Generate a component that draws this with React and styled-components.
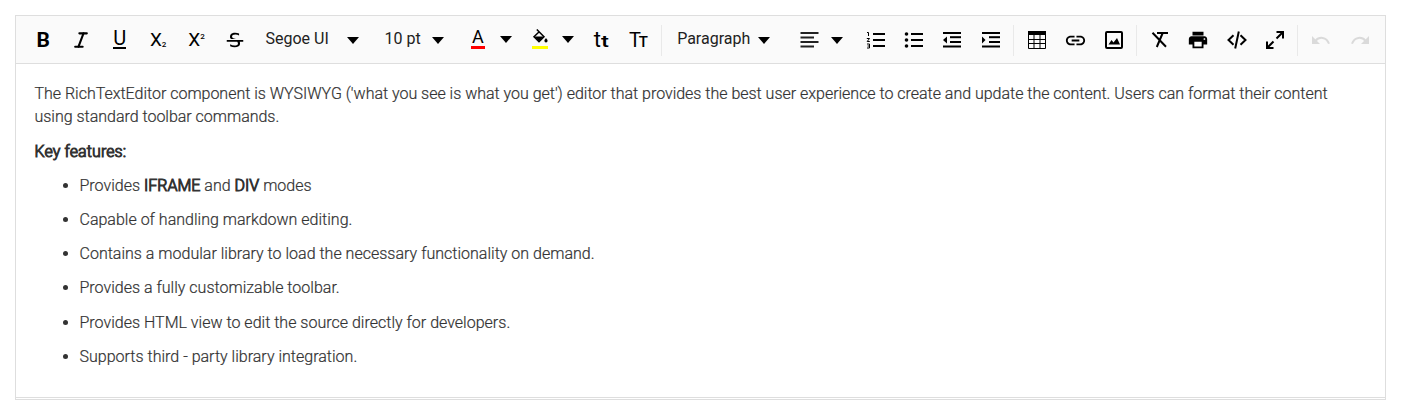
import React from "react";
import styled, { createGlobalStyle } from "styled-components";
import { Italic } from "lucide-react";
import { MdLink, MdPrint } from "react-icons/md";
import { RiStrikethrough } from "react-icons/ri";

const GlobalStyle = createGlobalStyle`
  body { margin: 0; background: #fff; font-family: Roboto, "Liberation Sans", sans-serif; }
  * { box-sizing: border-box; }
`;

const Editor = styled.div`
  margin: 15px 18px 0 15px;
  height: 385px;
  border: 1px solid #dedede;
  display: flex;
  flex-direction: column;
`;
const Toolbar = styled.div`
  flex: none;
  height: 48px;
  padding: 1px 0 0 8px;
  display: flex;
  align-items: center;
  background: #fafafa;
  border-bottom: 1px solid #dedede;
`;
const IconButton = styled.button`
  flex: none;
  width: 38.33px;
  height: 38px;
  padding: 0;
  border: 0;
  background: none;
  display: flex;
  align-items: center;
  justify-content: center;
  color: ${(p) => (p.disabled ? "#dadada" : "#000")};
  font: 400 20px/20px Roboto, sans-serif;
  svg { display: block; flex: none; }
`;
const DropButton = styled.button`
  flex: none;
  width: ${(p) => p.$width}px;
  height: 38px;
  padding: 0 ${(p) => p.$end}px 0 ${(p) => p.$start}px;
  border: 0;
  background: none;
  display: flex;
  align-items: center;
  justify-content: space-between;
  color: #212121;
  font: 400 16px/20px Roboto, sans-serif;
  white-space: nowrap;
`;
const Label = styled.span`
  margin-top: -3px;
`;
const Caret = styled.span`
  border: 6.5px solid transparent;
  border-top: 7px solid #000;
  border-bottom: 0;
  margin-top: ${(p) => p.$top ?? 0}px;
`;
const Separator = styled.span`
  flex: none;
  width: 1px;
  height: 31px;
  margin: 0 4px 0 3px;
  background: #e9e9e9;
`;
const Swatch = styled.span`
  width: ${(p) => p.$width}px;
  height: 20px;
  margin-top: -2px;
  display: flex;
  flex-direction: column;
  align-items: center;
  justify-content: space-between;
  border-bottom: 3px solid ${(p) => p.$color};
  color: #000;
  font-size: 18px;
  line-height: 16px;
`;
const Letter = styled.span`
  font-size: ${(p) => p.$size || 20}px;
  font-weight: ${(p) => p.$weight || 400};
  line-height: 20px;
  white-space: nowrap;
`;
const Underlined = styled.span`
  width: 13px;
  height: 18px;
  display: flex;
  justify-content: center;
  line-height: 15px;
  border-bottom: 2px solid #000;
`;
const Small = styled.span`
  display: inline-block;
  font-size: ${(p) => p.$size}px;
  font-weight: 500;
  line-height: 10px;
  transform: translateY(${(p) => p.$shift || 0}px) scaleX(${(p) => p.$stretch || 1});
  transform-origin: left;
  margin-left: ${(p) => p.$left || 0}px;
`;
const Content = styled.div`
  flex: 1;
  min-height: 0;
  padding: 17.5px 19px 0 18.5px;
  margin-bottom: 1px;
  border-bottom: 1px solid #dedede;
  color: #333;
  font-size: 16px;
  font-weight: 300;
  line-height: 23px;
  letter-spacing: -0.016px;
  -webkit-text-stroke: 0.2px #333;
`;
const Paragraph = styled.p`
  margin: 0 0 ${(p) => p.$gap ?? 12}px;
`;
const List = styled.ul`
  margin: 0;
  padding-left: 45px;
  letter-spacing: 0.01px;
`;
const Item = styled.li`
  margin-bottom: 11.2px;
`;
const Strong = styled.strong`
  font-weight: 300;
  -webkit-text-stroke: 1px #333;
`;
const Heading = styled(Strong)`
  letter-spacing: 0.1px;
`;

const Glyph = ({ w = 20, h = 20, children }) => (
  <svg width={w} height={h} viewBox={`0 0 ${w} ${h}`} fill="currentColor">{children}</svg>
);
const Bars = ({ rows }) => rows.map(([x, y, w]) => <rect key={y} x={x} y={y} width={w} height="2" />);

const AlignIcon = () => <Glyph w={19}><Bars rows={[[0.5, 2, 18], [0.5, 6.5, 13.5], [0.5, 11, 18], [0.5, 15.5, 13.5]]} /></Glyph>;
const NumberedIcon = () => (
  <Glyph>
    <Bars rows={[[7, 3, 12], [7, 9, 12], [7, 15, 12]]} />
    <g fill="none" stroke="#000" strokeWidth="1">
      <path d="M1 2.5h1.5V6M.8 8.5h2.7L1.2 11.5h2.6M1 14h2.5v4H1M1.5 16h2" />
    </g>
  </Glyph>
);
const BulletIcon = () => (
  <Glyph>
    <Bars rows={[[7, 3, 12], [7, 9, 12], [7, 15, 12]]} />
    <circle cx="2.5" cy="4" r="1.8" /><circle cx="2.5" cy="10" r="1.8" /><circle cx="2.5" cy="16" r="1.8" />
  </Glyph>
);
const IndentIcon = ({ inward }) => (
  <Glyph>
    <Bars rows={[[1, 2, 18], [8, 6.2, 11], [8, 11, 11], [1, 15.5, 18]]} />
    <path d={inward ? "M1 6.5v7L4.5 10z" : "M5 6.5v7L1 10z"} />
  </Glyph>
);
const TableIcon = () => (
  <Glyph>
    <rect x="1" y="1" width="18" height="4" />
    <path d="M1.5 4v14.5h17V4M7 5v13.5M13 5v13.5M1 9.5h18M1 13.5h18" fill="none" stroke="#000" strokeWidth="1" />
  </Glyph>
);
const ImageIcon = () => (
  <Glyph>
    <rect x="2" y="2" width="16" height="16" rx="1" fill="none" stroke="#000" strokeWidth="2" />
    <path d="M4.5 14.5L7.5 10l2 2.5L13 8l3 6.5z" />
  </Glyph>
);
const ClearIcon = () => (
  <Glyph>
    <path d="M7 3h11M2.5 2.8L16 16.7M12.5 3.5L6.8 17" fill="none" stroke="#000" strokeWidth="2" />
  </Glyph>
);
const CodeIcon = () => (
  <Glyph>
    <path d="M6.5 5.2L1.5 10l5 4.8M13.5 5.2l5 4.8-5 4.8M11.8 1.5L8.2 18.5" fill="none" stroke="#000" strokeWidth="2" />
  </Glyph>
);
const ExpandIcon = () => (
  <Glyph>
    <path d="M11.5 8.5L17.5 2.5M11.5 2h6.5v6.5M8.5 11.5L2.5 17.5M2 11.5V18h6.5" fill="none" stroke="#000" strokeWidth="2" />
  </Glyph>
);
const UndoIcon = ({ flip }) => (
  <Glyph>
    <g transform={flip ? "translate(20 0) scale(-1 1)" : undefined}>
      <path d="M1 6v8h8z" />
      <path d="M4.5 10.8C8 6.5 15.5 6.5 18 13.8" fill="none" stroke="currentColor" strokeWidth="2" />
    </g>
  </Glyph>
);
const BucketIcon = () => (
  <Glyph w={16} h={16}>
    <path d="M4.8.5L12 7.7 7 12.7 2 7.7 7.2 2.8" fill="none" stroke="#000" strokeWidth="1.5" />
    <path d="M2 7.5h10l-5 5z" />
    <path d="M14 9c1 1.4 1.6 2 1.6 2.8a1.6 1.6 0 0 1-3.2 0C12.4 11 13 10.4 14 9z" />
  </Glyph>
);

const features = [
  <>Provides <Strong>IFRAME</Strong> and <Strong>DIV</Strong> modes</>,
  "Capable of handling markdown editing.",
  "Contains a modular library to load the necessary functionality on demand.",
  "Provides a fully customizable toolbar.",
  "Provides HTML view to edit the source directly for developers.",
  "Supports third - party library integration.",
];

export default function App() {
  return (
    <>
      <GlobalStyle />
      <Editor>
        <Toolbar>
          <IconButton><Letter $size={21} $weight={700}>B</Letter></IconButton>
          <IconButton><Italic size={20} strokeWidth={2.5} /></IconButton>
          <IconButton><Underlined>U</Underlined></IconButton>
          <IconButton><Letter $size={19}>X<Small $size={8} $shift={1}>2</Small></Letter></IconButton>
          <IconButton><Letter $size={19}>X<Small $size={8} $shift={-7}>2</Small></Letter></IconButton>
          <IconButton><RiStrikethrough size={22} /></IconButton>
          <DropButton $width={119} $start={11.5} $end={14}><Label>Segoe UI</Label><Caret /></DropButton>
          <DropButton $width={85} $start={11.5} $end={14}><Label>10 pt</Label><Caret /></DropButton>
          <DropButton $width={62} $start={13} $end={8}><Swatch $width={14} $color="#f00">A</Swatch><Caret $top={-1} /></DropButton>
          <DropButton $width={61} $start={12} $end={7}><Swatch $width={16} $color="#ff0"><BucketIcon /></Swatch><Caret $top={-1} /></DropButton>
          <IconButton><Letter $size={22}>t<Small $size={17} $stretch={1.4}>t</Small></Letter></IconButton>
          <IconButton><Letter>T<Small $size={15} $left={-2}>T</Small></Letter></IconButton>
          <Separator />
          <DropButton $width={119} $start={11.5} $end={14.5}><Label>Paragraph</Label><Caret /></DropButton>
          <DropButton $width={72} $start={15} $end={14}><AlignIcon /><Caret /></DropButton>
          <IconButton><NumberedIcon /></IconButton>
          <IconButton><BulletIcon /></IconButton>
          <IconButton><IndentIcon /></IconButton>
          <IconButton><IndentIcon inward /></IconButton>
          <Separator />
          <IconButton><TableIcon /></IconButton>
          <IconButton><MdLink size={23} /></IconButton>
          <IconButton><ImageIcon /></IconButton>
          <Separator />
          <IconButton><ClearIcon /></IconButton>
          <IconButton><MdPrint size={22} /></IconButton>
          <IconButton><CodeIcon /></IconButton>
          <IconButton><ExpandIcon /></IconButton>
          <Separator />
          <IconButton disabled><UndoIcon /></IconButton>
          <IconButton disabled><UndoIcon flip /></IconButton>
        </Toolbar>
        <Content>
          <Paragraph>
            The RichTextEditor component is WYSIWYG ('what you see is what you get') editor that provides the best user experience to create and update the content. Users can format their content using standard toolbar commands.
          </Paragraph>
          <Paragraph $gap={11.4}><Heading>Key features:</Heading></Paragraph>
          <List>{features.map((f, i) => <Item key={i}>{f}</Item>)}</List>
        </Content>
      </Editor>
    </>
  );
}
